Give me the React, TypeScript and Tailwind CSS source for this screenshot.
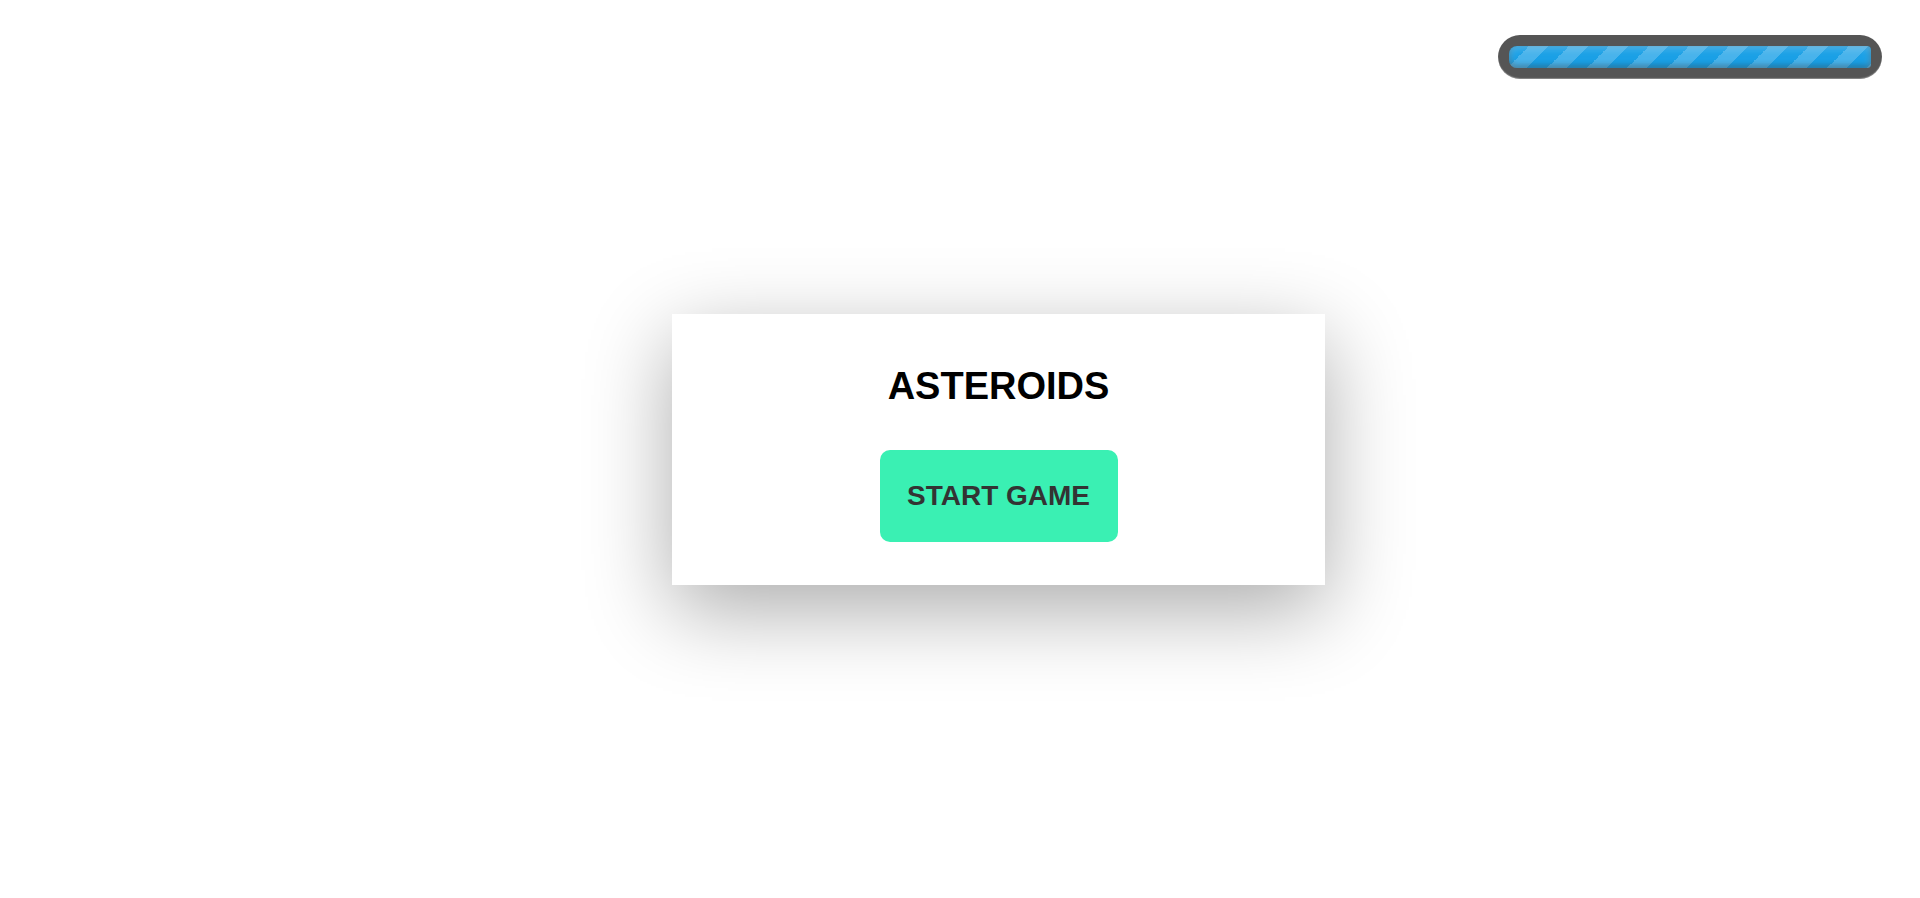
import React from "react";

export default function App() {
  return (
    <div className="relative h-[898px] w-full overflow-hidden bg-white font-['Comic_Sans_MS','Liberation_Sans',sans-serif]">
      <div className="absolute right-[38px] top-[35px] h-[44px] w-[384px] rounded-full bg-[#555555] p-[11px] shadow-[inset_0_-1px_1px_rgba(255,255,255,0.3)]">
        <div className="h-full w-full rounded-l-[8px] rounded-r-[4px] bg-[#1aa0e6] bg-[linear-gradient(-45deg,rgba(255,255,255,0.2)_25%,transparent_25%,transparent_50%,rgba(255,255,255,0.2)_50%,rgba(255,255,255,0.2)_75%,transparent_75%,transparent)] bg-[length:40px_40px] shadow-[inset_0_2px_9px_rgba(255,255,255,0.3),inset_0_-2px_6px_rgba(0,0,0,0.4)]" />
      </div>
      <div className="flex h-full items-center justify-center pl-[77px]">
        <div className="flex h-[271px] w-[653px] flex-col items-center bg-white pt-[53px] shadow-[0_25px_80px_rgba(0,0,0,0.33)]">
          <h1 className="text-[38px] font-bold leading-[38px] text-black">ASTEROIDS</h1>
          <button className="mt-[45px] flex h-[92px] w-[238px] items-center justify-center rounded-[10px] bg-[#3af0b3] text-[28px] font-bold text-[#333333]">
            START GAME
          </button>
        </div>
      </div>
    </div>
  );
}
